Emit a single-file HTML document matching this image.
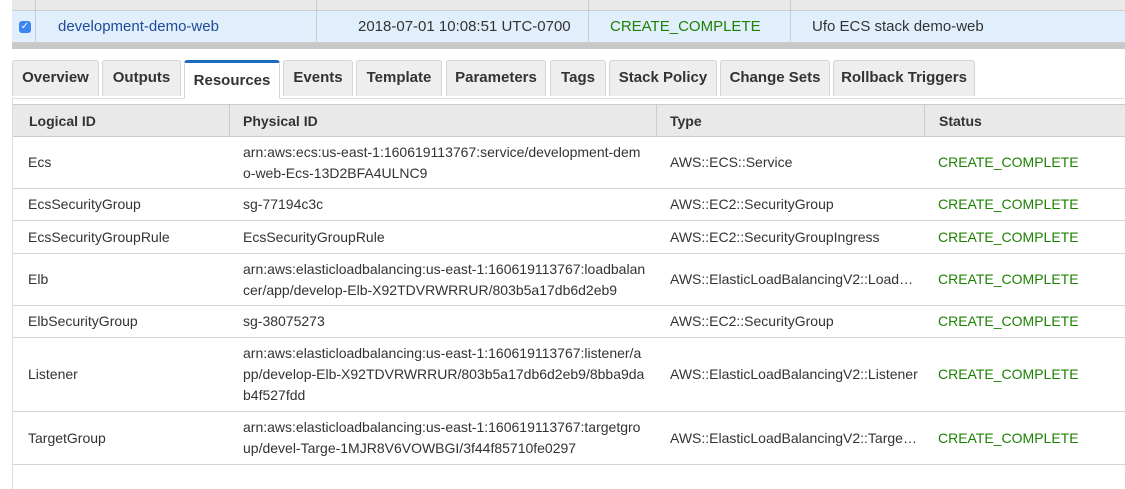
<!DOCTYPE html>
<html><head><style>
*{margin:0;padding:0;box-sizing:border-box}
body{width:1125px;height:489px;overflow:hidden;background:#fff;font-family:"Liberation Sans",Arial,sans-serif;font-size:14px;color:#333;position:relative}
.a{position:absolute}
.g{color:#1d8102}
.tab{position:absolute;top:60px;height:36px;background:#eee;border:1px solid #d5d5d5;border-bottom:none;border-radius:3px 3px 0 0;font-weight:bold;font-size:15px;color:#333;text-align:center;line-height:34px}
.row{position:absolute;left:13px;width:1112px;border-bottom:1px solid #d5d5d5}
.c{position:absolute;display:flex;align-items:center;height:100%;line-height:21px}
</style></head><body>
<div class="a" style="left:12px;top:0;width:1113px;height:11px;background:#e9e9e9;border-bottom:1px solid #ccc"></div>
<div class="a" style="left:12px;top:11px;width:1113px;height:32px;background:#e1effc;border-bottom:1px solid #ccc"></div>
<div class="a" style="left:12px;top:43px;width:1113px;height:6px;background:#c8c8c8"></div>
<div class="a" style="left:35px;top:0;width:1px;height:43px;background:#ccc"></div>
<div class="a" style="left:316px;top:0;width:1px;height:43px;background:#ccc"></div>
<div class="a" style="left:588px;top:0;width:1px;height:43px;background:#ccc"></div>
<div class="a" style="left:790px;top:0;width:1px;height:43px;background:#ccc"></div>
<div class="a" style="left:19px;top:21px;width:12px;height:12px;background:#3b86f0;border-radius:3px;color:#fff;font-size:10px;line-height:12px;text-align:center">✓</div>
<div class="a" style="left:58px;top:18px;color:#1f4a99;font-size:15px">development-demo-web</div>
<div class="a" style="left:358px;top:18px;font-size:15px">2018-07-01 10:08:51 UTC-0700</div>
<div class="a g" style="left:610px;top:18px;font-size:15px">CREATE_COMPLETE</div>
<div class="a" style="left:812px;top:18px;font-size:15px">Ufo ECS stack demo-web</div>
<div class="tab" style="left:12px;width:87px">Overview</div>
<div class="tab" style="left:102px;width:79px">Outputs</div>
<div class="tab" style="left:184px;width:96px;height:39px;background:#fff;border-top:3px solid #1f6bc2;line-height:36px;z-index:2">Resources</div>
<div class="tab" style="left:283px;width:70px">Events</div>
<div class="tab" style="left:356px;width:86px">Template</div>
<div class="tab" style="left:446px;width:100px">Parameters</div>
<div class="tab" style="left:550px;width:56px">Tags</div>
<div class="tab" style="left:609px;width:108px">Stack Policy</div>
<div class="tab" style="left:720px;width:110px">Change Sets</div>
<div class="tab" style="left:833px;width:142px">Rollback Triggers</div>
<div class="a" style="left:12px;top:98px;width:1113px;height:391px;border-top:1px solid #ddd;border-left:1px solid #ddd"></div>
<div class="a" style="left:13px;top:104px;width:1112px;height:33px;background:#e9e9e9;border-top:1px solid #ccc;border-bottom:1px solid #ccc"></div>
<div class="a" style="left:229px;top:104px;width:1px;height:33px;background:#ccc"></div>
<div class="a" style="left:656px;top:104px;width:1px;height:33px;background:#ccc"></div>
<div class="a" style="left:924px;top:104px;width:1px;height:33px;background:#ccc"></div>
<div class="a" style="left:29px;top:113px;font-weight:bold">Logical ID</div>
<div class="a" style="left:243px;top:113px;font-weight:bold">Physical ID</div>
<div class="a" style="left:670px;top:113px;font-weight:bold">Type</div>
<div class="a" style="left:939px;top:113px;font-weight:bold">Status</div>
<div class="row" style="top:137px;height:52px"><div class="c" style="left:15px">Ecs</div><div class="c" style="left:230px">arn:aws:ecs:us-east-1:160619113767:service/development-dem<br>o-web-Ecs-13D2BFA4ULNC9</div><div class="c" style="left:657px">AWS::ECS::Service</div><div class="c g" style="left:925px">CREATE_COMPLETE</div></div>
<div class="row" style="top:189px;height:32px"><div class="c" style="left:15px">EcsSecurityGroup</div><div class="c" style="left:230px">sg-77194c3c</div><div class="c" style="left:657px">AWS::EC2::SecurityGroup</div><div class="c g" style="left:925px">CREATE_COMPLETE</div></div>
<div class="row" style="top:221px;height:33px"><div class="c" style="left:15px">EcsSecurityGroupRule</div><div class="c" style="left:230px">EcsSecurityGroupRule</div><div class="c" style="left:657px">AWS::EC2::SecurityGroupIngress</div><div class="c g" style="left:925px">CREATE_COMPLETE</div></div>
<div class="row" style="top:254px;height:52px"><div class="c" style="left:15px">Elb</div><div class="c" style="left:230px">arn:aws:elasticloadbalancing:us-east-1:160619113767:loadbalan<br>cer/app/develop-Elb-X92TDVRWRRUR/803b5a17db6d2eb9</div><div class="c" style="left:657px">AWS::ElasticLoadBalancingV2::Load…</div><div class="c g" style="left:925px">CREATE_COMPLETE</div></div>
<div class="row" style="top:306px;height:32px"><div class="c" style="left:15px">ElbSecurityGroup</div><div class="c" style="left:230px">sg-38075273</div><div class="c" style="left:657px">AWS::EC2::SecurityGroup</div><div class="c g" style="left:925px">CREATE_COMPLETE</div></div>
<div class="row" style="top:338px;height:74px"><div class="c" style="left:15px">Listener</div><div class="c" style="left:230px">arn:aws:elasticloadbalancing:us-east-1:160619113767:listener/a<br>pp/develop-Elb-X92TDVRWRRUR/803b5a17db6d2eb9/8bba9da<br>b4f527fdd</div><div class="c" style="left:657px">AWS::ElasticLoadBalancingV2::Listener</div><div class="c g" style="left:925px">CREATE_COMPLETE</div></div>
<div class="row" style="top:412px;height:53px"><div class="c" style="left:15px">TargetGroup</div><div class="c" style="left:230px">arn:aws:elasticloadbalancing:us-east-1:160619113767:targetgro<br>up/devel-Targe-1MJR8V6VOWBGI/3f44f85710fe0297</div><div class="c" style="left:657px">AWS::ElasticLoadBalancingV2::Targe…</div><div class="c g" style="left:925px">CREATE_COMPLETE</div></div>
</body></html>
